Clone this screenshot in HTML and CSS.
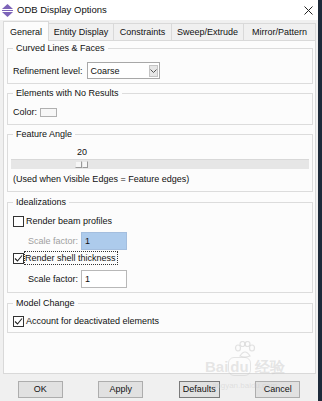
FILE: index.html
```html
<!DOCTYPE html>
<html lang="en">
  <head>
    <meta charset="utf-8" />
    <link rel="stylesheet" href="styles.css">
  </head>
  <body>
    <div class="window">
      <div class="titlebar">
        <svg class="app-icon" width="11" height="13" viewBox="0 0 11 13">
          <polygon points="5.5,0 11,5 0,5" fill="#7d64b8" />
          <rect x="0" y="6" width="11" height="1" fill="#7d64b8" />
          <polygon points="0,8 11,8 5.5,13" fill="#7d64b8" />
        </svg>
        <span class="title">ODB Display Options</span>
        <svg class="close" width="9" height="9" viewBox="0 0 9 9">
          <path d="M0.5 0.5 L8.5 8.5 M8.5 0.5 L0.5 8.5" stroke="#222" stroke-width="1" />
        </svg>
      </div>

      <div class="tabs">
        <div class="tab active tab-general">General</div>
        <div class="tab tab-entity">Entity Display</div>
        <div class="tab tab-constraints">Constraints</div>
        <div class="tab tab-sweep">Sweep/Extrude</div>
        <div class="tab tab-mirror">Mirror/Pattern</div>
      </div>

      <div class="panel">
        <fieldset class="group group-curved">
          <legend>Curved Lines &amp; Faces</legend>
          <div class="row">
            <span>Refinement level:</span>
            <div class="combo">
              <span class="combo-value">Coarse</span>
              <span class="combo-btn">
                <svg width="7" height="4" viewBox="0 0 7 4">
                  <path d="M0.5 0.5 L3.5 3.5 L6.5 0.5" stroke="#555" fill="none" />
                </svg>
              </span>
            </div>
          </div>
        </fieldset>

        <fieldset class="group group-color">
          <legend>Elements with No Results</legend>
          <div class="row">
            <span>Color:</span>
            <span class="swatch"></span>
          </div>
        </fieldset>

        <fieldset class="group group-angle">
          <legend>Feature Angle</legend>
          <div class="slider-value">20</div>
          <div class="slider">
            <span class="thumb"><span></span><span></span></span>
          </div>
          <div class="note">(Used when Visible Edges = Feature edges)</div>
        </fieldset>

        <fieldset class="group group-ideal">
          <legend>Idealizations</legend>
          <label class="check">
            <span class="box"></span>
            <span>Render beam profiles</span>
          </label>
          <div class="scale disabled">
            <span>Scale factor:</span>
            <span class="field field-selected">1</span>
          </div>
          <label class="check check-focus">
            <span class="box checked">
              <svg width="9" height="9" viewBox="0 0 9 9">
                <path d="M1 4.5 L3.5 7 L8 1.5" stroke="#222" stroke-width="1.1" fill="none" />
              </svg>
            </span>
            <span class="focus">Render shell thickness</span>
          </label>
          <div class="scale scale-last">
            <span>Scale factor:</span>
            <span class="field">1</span>
          </div>
        </fieldset>

        <fieldset class="group group-model">
          <legend>Model Change</legend>
          <label class="check">
            <span class="box checked">
              <svg width="9" height="9" viewBox="0 0 9 9">
                <path d="M1 4.5 L3.5 7 L8 1.5" stroke="#222" stroke-width="1.1" fill="none" />
              </svg>
            </span>
            <span>Account for deactivated elements</span>
          </label>
        </fieldset>
      </div>

      <div class="buttons">
        <button class="btn">OK</button>
        <button class="btn">Apply</button>
        <button class="btn btn-default">Defaults</button>
        <button class="btn">Cancel</button>
      </div>

      <div class="watermark">
        <svg class="wm-paw" width="22" height="17" viewBox="0 0 22 17">
          <g fill="none" stroke="rgba(200,200,200,0.5)" stroke-width="1.2">
            <ellipse cx="4" cy="7" rx="2.5" ry="3" />
            <ellipse cx="8.5" cy="3" rx="2.5" ry="2.5" />
            <ellipse cx="13.5" cy="3" rx="2.5" ry="2.5" />
            <ellipse cx="18" cy="7" rx="2.5" ry="3" />
            <path d="M6 15 Q11 7 16 15 Q11 17 6 15 Z" />
          </g>
        </svg>
        <div class="wm-logo">Bai<span class="wm-du">du</span> 经验</div>
        <div class="wm-url">jingyan.baidu.com</div>
      </div>
    </div>
  </body>
</html>
```

FILE: styles.css
```css
body {
  margin: 0;
  width: 322px;
  height: 401px;
  overflow: hidden;
  background: #1d2a3a;
  font-family: "Liberation Sans", Arial, sans-serif;
  font-size: 9px;
  line-height: 14px;
  color: #111;
}

.window {
  position: relative;
  width: 318px;
  height: 401px;
  background: #f0f0f0;
  display: flex;
  flex-direction: column;
}

/* title bar */
.titlebar {
  height: 20px;
  background: #fff;
  display: flex;
  align-items: center;
  padding-left: 2px;
}

.app-icon {
  display: block;
}

.title {
  margin-left: 4px;
  font-size: 9.5px;
}

.close {
  margin-left: auto;
  margin-right: 5px;
}

/* tabs */
.tabs {
  display: flex;
  align-items: flex-end;
  height: 19px;
  margin-top: 1px;
  padding-left: 3px;
}

.tab {
  box-sizing: border-box;
  height: 17px;
  border: 1px solid #d9d9d9;
  border-bottom: 0;
  background: #f0f0f0;
  margin-left: -1px;
  text-align: center;
  line-height: 17px;
}

.tab-general { width: 46px; margin-left: 0; }
.tab-entity { width: 66px; }
.tab-constraints { width: 59px; }
.tab-sweep { width: 73px; }
.tab-mirror { width: 73px; }

.tab.active {
  position: relative;
  z-index: 1;
  height: 20px;
  margin-bottom: -1px;
  background: #fcfcfc;
  line-height: 20px;
}

/* page panel */
.panel {
  box-sizing: border-box;
  width: 313px;
  height: 334px;
  margin-left: 3px;
  border: 1px solid #d9d9d9;
  background: #fcfcfc;
  padding: 0 2px 0 3px;
}

.group {
  margin: 0;
  padding: 0 5px;
  border: 1px solid #dcdcdc;
  min-width: 0;
}

.group + .group {
  margin-top: 2px;
}

.group legend {
  padding: 0 3px;
}

.row {
  display: flex;
  align-items: center;
}

.group-curved {
  padding-top: 7px;
  padding-bottom: 4px;
}

.group-color {
  padding-top: 5px;
  padding-bottom: 5px;
}

.group-angle {
  padding-top: 4px;
  padding-bottom: 5px;
}

.group-ideal {
  padding-top: 5px;
  padding-bottom: 4px;
}

.group-model {
  padding-top: 4px;
  padding-bottom: 4px;
}

.group + .group-ideal,
.group + .group-model {
  margin-top: 3px;
}

/* combo box */
.combo {
  box-sizing: border-box;
  width: 73px;
  height: 17px;
  margin-left: 4px;
  border: 1px solid #a8a8a8;
  background: #fff;
  display: flex;
  align-items: center;
  padding: 0 1px 0 3px;
}

.combo-btn {
  box-sizing: border-box;
  margin-left: auto;
  width: 9px;
  height: 12px;
  border: 1px solid #c4c4c4;
  background: #e6e6e6;
  display: flex;
  align-items: center;
  justify-content: center;
}

.combo-btn svg {
  display: block;
}

.swatch {
  box-sizing: border-box;
  width: 17px;
  height: 9px;
  margin-left: 3px;
  border: 1px solid #b0b0b0;
  background: #f7f7f7;
}

/* slider */
.slider-value {
  padding-left: 64px;
}

.slider {
  box-sizing: border-box;
  height: 10px;
  margin: 0 -2px;
  border-top: 1px solid #d8d8d8;
  background: #e6e6e6;
  display: flex;
  align-items: center;
  padding-left: 64px;
}

.thumb {
  display: flex;
  height: 7px;
}

.thumb span {
  box-sizing: border-box;
  width: 7px;
  height: 7px;
  border: 1px solid #9a9a9a;
  border-top-color: #e6e6e6;
  border-left-color: #e6e6e6;
  background: #f6f6f6;
}

.thumb span + span {
  width: 6px;
}

.note {
  margin-top: 3px;
}

/* checkboxes */
.check {
  display: flex;
  align-items: center;
  height: 14px;
}

.box {
  box-sizing: border-box;
  width: 11px;
  height: 11px;
  border: 1px solid #333;
  background: #fff;
  margin-right: 2px;
  display: flex;
  align-items: center;
  justify-content: center;
}

.box svg {
  display: block;
}

.check-focus {
  margin-top: 1px;
}

.focus {
  outline: 1px dotted #333;
  outline-offset: 0;
  padding: 0 1px 0 0;
  margin-left: -1px;
  line-height: 12px;
}

.scale {
  display: flex;
  align-items: center;
  height: 18px;
  padding-left: 15px;
  margin-top: 4px;
}

.scale-last {
  margin-top: 5px;
}

.scale.disabled {
  color: #a0a0a0;
}

.field {
  box-sizing: border-box;
  width: 46px;
  height: 18px;
  margin-left: 3px;
  border: 1px solid #b8b8b8;
  background: #fff;
  color: #111;
  padding-left: 3px;
  line-height: 16px;
}

.field-selected {
  background: #adcbec;
  border-color: #a4bede;
}

/* dialog buttons */
.buttons {
  display: flex;
  justify-content: space-around;
  margin-top: 7px;
}

.btn {
  box-sizing: border-box;
  width: 45px;
  height: 17px;
  padding: 0;
  border: 1px solid #adadad;
  background: #e1e1e1;
  font: inherit;
  color: #111;
  line-height: 15px;
}

.btn-default {
  width: 41px;
  border-color: #7a7a7a;
}

/* baidu watermark over the corner */
.watermark {
  position: absolute;
  left: 205px;
  top: 341px;
  color: rgba(200, 200, 200, 0.45);
  pointer-events: none;
  text-align: center;
}

.wm-paw {
  display: block;
  margin: 0 auto;
}

.wm-logo {
  font-size: 15px;
  font-weight: bold;
  line-height: 18px;
}

.wm-du {
  border: 1px solid rgba(200, 200, 200, 0.45);
  border-radius: 6px;
  padding: 0 1px;
}

.wm-url {
  font-size: 8px;
  line-height: 10px;
  margin-top: 5px;
}
```
